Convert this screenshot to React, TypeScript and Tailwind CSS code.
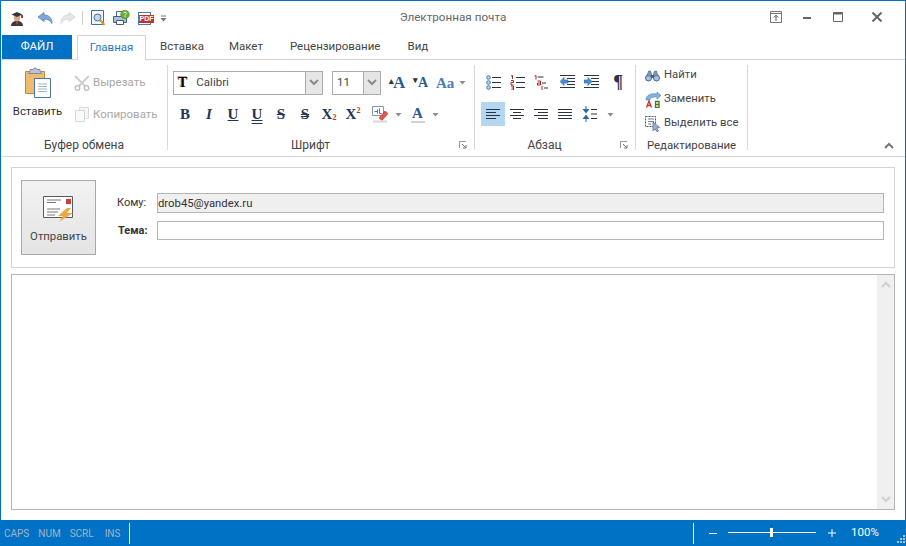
const FONT = "font-['Roboto',sans-serif]"

function Caret({ className = "" }: { className?: string }) {
    return (
        <svg width="7" height="7" viewBox="0 0 7 7" className={className}>
            <path d="M0.5 2h6L3.5 5.5z" fill="#8a8a8a" />
        </svg>
    )
}

function Chevron({ color = "#8a8a8a", up = false }: { color?: string; up?: boolean }) {
    return (
        <svg width="10" height="7" viewBox="0 0 10 7">
            <path d={up ? "M1 6l4-4 4 4" : "M1 1l4 4 4-4"} fill="none" stroke={color} strokeWidth="2" />
        </svg>
    )
}

function QuickAccess() {
    return (
        <div className="flex items-center pl-[9px] h-full">
            {/* user */}
            <svg width="14" height="16" viewBox="0 0 14 16" className="mt-[2px]">
                <path d="M1 15c0-3 2-5 6-5s6 2 6 5z" fill="#3a3a40" />
                <path d="M5.500 10.500h3L7 14z" fill="#b8463a" />
                <circle cx="7" cy="7" r="3.200" fill="#d8a78c" />
                <path d="M1.500 3.500L7 1l5.500 2.500L7 6z" fill="#34343a" />
                <path d="M11 4h2v3h-2z" fill="#b03a2e" />
            </svg>
            {/* undo */}
            <svg width="16" height="12" viewBox="0 0 16 12" className="ml-[13px]">
                <path d="M1 5l6-4.500V3c5 0 8 3 8 8.500-1.500-3-4-4.500-8-4.500v2.500z" fill="#7fa9d8" stroke="#4f7fb5" strokeWidth="0.8" />
            </svg>
            {/* redo */}
            <svg width="16" height="12" viewBox="0 0 16 12" className="ml-[7px]">
                <path d="M15 5L9 .5V3C4 3 1 6 1 11.500 2.500 8.500 5 7 9 7v2.500z" fill="#e6e6e6" stroke="#cfcfcf" strokeWidth="0.8" />
            </svg>
            <div className="w-px h-[14px] bg-[#d0d0d0] ml-[6px]" />
            {/* preview */}
            <svg width="15" height="17" viewBox="0 0 15 17" className="ml-[8px]">
                <path d="M.5.5h12v14H.5z" fill="#f4f8fd" stroke="#3c6ea8" />
                <circle cx="6.500" cy="7.500" r="3.500" fill="#bcd8f2" stroke="#3f6f9f" />
                <path d="M9 10l4.500 5" stroke="#d99a2b" strokeWidth="2.200" />
            </svg>
            {/* printer */}
            <svg width="17" height="16" viewBox="0 0 17 16" className="ml-[7px]">
                <path d="M3.500 1.500h7v5h-7z" fill="#f4f4f4" stroke="#4c6a8c" />
                <path d="M.5 6.500h13v6H.5z" fill="#a9c2dc" stroke="#3f5f82" />
                <path d="M3.500 10.500h7v4h-7z" fill="#fff" stroke="#3f5f82" />
                <circle cx="12" cy="4.500" r="4.300" fill="#6cab2f" stroke="#4c8a1c" strokeWidth="0.600" />
                <path d="M10.500 3.300c.3-1.500 3-1.500 3 .2 0 1-1.500 1-1.500 2M12 6.200v1" stroke="#fff" strokeWidth="1" fill="none" />
            </svg>
            {/* pdf */}
            <div className="ml-[8px] relative w-[16px] h-[13px] mt-[1px]">
                <div className="absolute left-0 top-0 w-[13px] h-[13px] bg-white border border-[#4a78ae]" />
                <div className="absolute left-[1px] top-[3px] w-[15px] h-[8px] bg-[#c4302b] text-white font-['Liberation_Sans',sans-serif] font-bold text-[7px] leading-[8px] text-center">PDF</div>
            </div>
            <svg width="7" height="7" viewBox="0 0 7 7" className="ml-[6px]">
                <path d="M1 1h5" stroke="#777" />
                <path d="M.5 3h6L3.500 6.500z" fill="#777" />
            </svg>
        </div>
    )
}

function WindowButtons() {
    return (
        <div className="flex items-center justify-end h-full">
            <svg width="12" height="12" viewBox="0 0 12 12" className="mb-[3px]">
                <path d="M.5.5h11v11H.5z" fill="none" stroke="#777" />
                <path d="M.5 2.500h11" stroke="#777" />
                <path d="M6 10V4.500M3.700 6.500L6 4.200l2.300 2.300" fill="none" stroke="#555" />
            </svg>
            <div className="w-2 h-[2px] bg-[#666] ml-[21px] mb-[1px]" />
            <svg width="10" height="10" viewBox="0 0 10 10" className="ml-[22px] mb-[3px]">
                <path d="M.5.5h9v9h-9z" fill="none" stroke="#666" />
                <path d="M0 1.500h10" stroke="#666" strokeWidth="2" />
            </svg>
            <svg width="10" height="10" viewBox="0 0 10 10" className="ml-[29px] mr-[23px] mb-[3px]">
                <path d="M.5.5l9 9M9.500.5l-9 9" stroke="#666" strokeWidth="2" />
            </svg>
        </div>
    )
}

function TabBar() {
    return (
        <div className="flex h-[25px] pl-px border-b border-[#d4d4d4] text-[11.5px] text-[#444]">
            <div className="w-[70px] h-[24px] bg-[#0072c6] text-white flex items-center justify-center">ФАЙЛ</div>
            <div className="ml-[5px] w-[69px] h-[25px] border-x border-t border-[#d4d4d4] bg-white text-[#2b79c2] flex items-center justify-center">Главная</div>
            <div className="flex h-[24px] items-center gap-[27px] ml-[14px]">
                <span className="-mr-[2px]">Вставка</span>
                <span>Макет</span>
                <span>Рецензирование</span>
                <span>Вид</span>
            </div>
        </div>
    )
}

function PasteIcon() {
    return (
        <svg width="28" height="32" viewBox="0 0 28 32">
            <path d="M1.500 4.500h19v22h-19z" fill="#eebc6e" stroke="#b98a45" />
            <path d="M6 4V2.500h3c.5-2 3.500-2 4 0h3V4l1.500 2.500h-13z" fill="#b9c5d4" stroke="#7f8ea3" />
            <path d="M10.500 11.500h16v19h-16z" fill="#fff" stroke="#4a71ad" />
            <path d="M14 17h9M14 19.500h9M14 22h9M14 24.500h9" stroke="#9fb3d2" />
        </svg>
    )
}

function ScissorsIcon() {
    return (
        <svg width="16" height="16" viewBox="0 0 16 16">
            <path d="M1 1l10 10M15 1L5 11" stroke="#cfcfcf" strokeWidth="2" />
            <circle cx="3.500" cy="13" r="2.300" fill="none" stroke="#bcbcbc" strokeWidth="1.300" />
            <circle cx="12.500" cy="13" r="2.300" fill="none" stroke="#bcbcbc" strokeWidth="1.300" />
        </svg>
    )
}

function CopyIcon() {
    return (
        <svg width="14" height="15" viewBox="0 0 14 15">
            <path d="M4.500.5h9v11h-9z" fill="#f7f7f7" stroke="#dcdcdc" />
            <path d="M.5 3.500h9v11h-9z" fill="#fafafa" stroke="#d6d6d6" />
        </svg>
    )
}

function Group({
    width,
    label,
    labelClass = "text-[12px]",
    launcher = false,
    children,
}: {
    width: string
    label: string
    labelClass?: string
    launcher?: boolean
    children: React.ReactNode
}) {
    return (
        <div className={`${width} h-[85px] border-r border-[#d9d9d9] flex flex-col`}>
            <div className="h-[75px]">{children}</div>
            <div className="flex items-center h-[10px]">
                <span className={`flex-1 text-center leading-[15px] text-[#444] ${labelClass}`}>{label}</span>
                {launcher ? (
                    <div className="w-[21px] pl-[6px] flex">
                        <svg width="8" height="8" viewBox="0 0 8 8">
                            <path d="M.5 7V.5H7" fill="none" stroke="#999" />
                            <path d="M3 3l4 4M7 4v3H4" fill="none" stroke="#777" />
                        </svg>
                    </div>
                ) : null}
            </div>
        </div>
    )
}

function Combo({ width, text, icon = false }: { width: string; text: string; icon?: boolean }) {
    return (
        <div className={`${width} h-[24px] border border-[#ababab] flex items-center bg-white`}>
            <div className="flex-1 flex items-center pl-[4px] text-[11.5px] text-[#444]">
                {icon ? (
                    <span className="font-['Liberation_Serif',serif] font-bold text-[14px] leading-none text-black mr-[9px] [text-shadow:-1px_-1px_0_#aaa]">T</span>
                ) : null}
                {text}
            </div>
            <div className="w-[17px] h-full bg-[#e6e6e6] border-l border-[#ababab] flex items-center justify-center">
                <Chevron />
            </div>
        </div>
    )
}

function Fmt({ children, className = "" }: { children: React.ReactNode; className?: string }) {
    return (
        <div className={`w-6 h-6 flex items-center justify-center font-['Liberation_Serif',serif] font-bold text-[15px] text-[#26344f] ${className}`}>
            {children}
        </div>
    )
}

function FontGroup() {
    return (
        <div className="pl-[5px] pt-[5px]">
            <div className="flex items-center">
                <Combo width="w-[150px]" text="Calibri" icon />
                <div className="ml-[9px]"><Combo width="w-[49px]" text="11" /></div>
                <span className="ml-[8px] w-[16px] text-center font-['Liberation_Serif',serif] font-bold text-[17px] text-[#2c5a94]">
                    <sup className="text-[9px] text-[#333] -mr-px">▴</sup>A
                </span>
                <span className="ml-[8px] w-[15px] text-center font-['Liberation_Serif',serif] font-bold text-[14px] text-[#2c5a94]">
                    <sup className="text-[9px] text-[#333]">▾</sup>A
                </span>
                <span className="ml-[8px] w-[17px] text-center font-['Liberation_Serif',serif] font-bold text-[15px] text-[#4a7cb5]">Aa</span>
                <Caret className="ml-[6px]" />
            </div>
            <div className="flex items-center mt-[7px]">
                <Fmt>B</Fmt>
                <Fmt className="italic">I</Fmt>
                <Fmt className="underline">U</Fmt>
                <Fmt className="underline decoration-double">U</Fmt>
                <Fmt className="line-through">S</Fmt>
                <Fmt className="line-through decoration-double">S</Fmt>
                <Fmt>X<span className="text-[8px] text-[#b03a2e] mt-[7px]">2</span></Fmt>
                <Fmt>X<span className="text-[8px] text-[#b03a2e] -mt-[7px]">2</span></Fmt>
                <svg width="17" height="17" viewBox="0 0 17 17" className="ml-[7px]">
                    <path d="M.5.5h11v9H.5z" fill="#fff" stroke="#7d93b8" />
                    <path d="M2.500 5.500h3M5.500 3.500v4M7.500 2.500v5h2" stroke="#5874a5" fill="none" />
                    <path d="M7 12l6-7 3 2.500-6 7z" fill="#e0574c" stroke="#b73a30" strokeWidth="0.600" />
                    <path d="M1 15.500h14" stroke="#d8d8d8" strokeWidth="2" />
                </svg>
                <Caret className="ml-[6px]" />
                <span className="ml-[8px] w-[15px] flex flex-col items-center">
                    <span className="font-['Liberation_Serif',serif] font-bold text-[15px] leading-[14px] text-[#2c5a94]">A</span>
                    <span className="w-[14px] h-[2px] mt-px bg-[#d0d0d0]" />
                </span>
                <Caret className="ml-[7px]" />
            </div>
        </div>
    )
}

function Lines({ pattern }: { pattern: "left" | "center" | "right" | "justify" }) {
    const rows = {
        left: ["M0 1.500h14", "M0 4.500h10", "M0 7.500h14", "M0 10.500h10"],
        center: ["M0 1.500h14", "M3 4.500h8", "M0 7.500h14", "M3 10.500h8"],
        right: ["M0 1.500h14", "M4 4.500h10", "M0 7.500h14", "M4 10.500h10"],
        justify: ["M0 1.500h14", "M0 4.500h14", "M0 7.500h14", "M0 10.500h14"],
    }[pattern]
    return (
        <svg width="14" height="12" viewBox="0 0 14 12">
            {rows.map((d) => (
                <path key={d} d={d} stroke="#2a3342" />
            ))}
        </svg>
    )
}

function ListBullets() {
    return (
        <svg width="15" height="15" viewBox="0 0 15 15">
            {[2.500, 7.500, 12.500].map((y) => (
                <g key={y}>
                    <circle cx="2.500" cy={y} r="1.800" fill="#bcd5ee" stroke="#3f78b5" />
                    <path d={`M6 ${y}h9`} stroke="#2a3342" />
                </g>
            ))}
        </svg>
    )
}

function ListNumbers() {
    return (
        <svg width="15" height="15" viewBox="0 0 15 15">
            <path d="M1 1l1.500-.5V4M1 5.500h2.500v2H1V10h2.500M1 11h2.500v4H1M1.500 13h2" fill="none" stroke="#a32a2a" />
            <path d="M6 2.500h9M6 7.500h9M6 12.500h9" stroke="#2a3342" />
        </svg>
    )
}

function ListMulti() {
    return (
        <svg width="14" height="15" viewBox="0 0 14 15">
            <path d="M.5 1l1.500-.5V4.500M3.500 6h3v4h-3V8h3M8 11v4M8 9.500v.5" fill="none" stroke="#a32a2a" />
            <path d="M3.500 2h6M8 8h4M10 13h4" stroke="#2a3342" />
        </svg>
    )
}

function Indent({ flip = false }: { flip?: boolean }) {
    return (
        <svg width="15" height="14" viewBox="0 0 15 14">
            <path d="M0 .5h15M7 3.500h8M7 6.500h8M7 9.500h8M0 12.500h15" stroke="#2a3342" />
            <path
                d={flip ? "M0 5h4V2.500L8 6.500l-4 4V8H0z" : "M8 5H4V2.500L0 6.500l4 4V8h4z"}
                fill="#4a90d0"
                stroke="#2d6aa5"
                strokeWidth="0.600"
            />
        </svg>
    )
}

function Spacing() {
    return (
        <svg width="15" height="16" viewBox="0 0 15 16">
            <path d="M4 0v3M4 13v3" stroke="#2d6aa5" />
            <path d="M.5 3h7L4 7.500zM.5 13h7L4 8.500z" fill="#2d6aa5" />
            <path d="M9 3.500h6M9 8h6M9 12.500h6" stroke="#2a3342" />
        </svg>
    )
}

function ParagraphGroup() {
    const cell = "w-6 h-6 flex items-center justify-center"
    return (
        <div className="pl-[6px] pt-[5px]">
            <div className="flex items-center h-[24px]">
                <div className={cell}><ListBullets /></div>
                <div className={cell}><ListNumbers /></div>
                <div className={cell}><ListMulti /></div>
                <div className={`${cell} ml-[2px]`}><Indent /></div>
                <div className={cell}><Indent flip /></div>
                <div className={`${cell} ml-[3px] font-['Liberation_Serif',serif] font-bold text-[18px] text-[#26344f]`}>¶</div>
            </div>
            <div className="flex items-center mt-[8px] h-[24px]">
                <div className={`${cell} bg-[#b4d6f0]`}><Lines pattern="left" /></div>
                <div className={cell}><Lines pattern="center" /></div>
                <div className={cell}><Lines pattern="right" /></div>
                <div className={cell}><Lines pattern="justify" /></div>
                <div className={cell}><Spacing /></div>
                <Caret className="ml-[6px]" />
            </div>
        </div>
    )
}

function EditGroup() {
    return (
        <div className="pl-[9px] pt-px text-[11.3px] text-[#444] flex flex-col gap-[5px]">
            <div className="flex items-center h-[19px] gap-[4px]">
                <svg width="15" height="12" viewBox="0 0 15 12">
                    <circle cx="3.500" cy="8" r="3" fill="#a9c6e6" stroke="#44628a" />
                    <circle cx="11.500" cy="8" r="3" fill="#a9c6e6" stroke="#44628a" />
                    <path d="M2 6l1.500-5h2L7 6zM8 6l1.500-5h2L13 6z" fill="#8599b5" stroke="#44628a" strokeWidth="0.600" />
                    <path d="M6 5h3v3H6z" fill="#44628a" />
                </svg>
                <span>Найти</span>
            </div>
            <div className="flex items-center h-[19px] gap-[3px]">
                <svg width="16" height="16" viewBox="0 0 16 16">
                    <path d="M1 8C1 3 6 1 12 2V0l4 3.500L12 7V5C8 4.500 5 5.500 5 8z" fill="#7fb4e0" stroke="#4c80b3" strokeWidth="0.600" />
                    <path d="M1.500 15.500L4 9l2.500 6.500M2.500 13.500h3" fill="none" stroke="#c4302b" strokeWidth="1.300" />
                    <path d="M10.500 9.500h3.500v6h-3.500zM10.500 12.500h3.500" fill="none" stroke="#3f7a1e" strokeWidth="1.300" />
                </svg>
                <span>Заменить</span>
            </div>
            <div className="flex items-center h-[19px] gap-[3px]">
                <svg width="16" height="16" viewBox="0 0 16 16">
                    <path d="M.5 .5h10v10H.5z" fill="none" stroke="#555" strokeDasharray="2 1" />
                    <path d="M3 3h6M3 5.500h6M3 8h3" stroke="#6d7f99" />
                    <path d="M8 6l6.500 5.500-3 .5 2 3-1.500.8-2-3-2 2z" fill="#9bb4d1" stroke="#44628a" strokeWidth="0.700" />
                </svg>
                <span>Выделить все</span>
            </div>
        </div>
    )
}

function Ribbon() {
    return (
        <div className="flex h-[97px] border-b border-[#d4d4d4] pt-[5px]">
            <Group width="w-[167px]" label="Буфер обмена">
                <div className="flex">
                    <div className="w-[73px] flex flex-col items-center pt-[2px]">
                        <PasteIcon />
                        <span className="text-[11.4px] text-[#333] mt-[4px]">Вставить</span>
                    </div>
                    <div className="flex flex-col text-[11.5px] text-[#a8a8a8] pt-[9px] gap-[15px]">
                        <div className="flex items-center gap-[3px] h-[17px]"><ScissorsIcon /><span>Вырезать</span></div>
                        <div className="flex items-center gap-[4px] h-[17px] pl-px"><CopyIcon /><span>Копировать</span></div>
                    </div>
                </div>
            </Group>
            <Group width="w-[307px]" label="Шрифт" launcher><FontGroup /></Group>
            <Group width="w-[161px]" label="Абзац" launcher><ParagraphGroup /></Group>
            <Group width="w-[112px]" label="Редактирование" labelClass="text-[11.4px]"><EditGroup /></Group>
            <div className="flex-1 flex items-end justify-end pr-[11px] pb-px h-[85px]">
                <Chevron up color="#777" />
            </div>
        </div>
    )
}

function Header() {
    return (
        <div className="h-[101px] border border-[#d4d4d4] flex pl-[9px] pt-[12px]">
            <div className="w-[75px] h-[75px] border border-[#a8a8a8] bg-gradient-to-b from-[#f2f2f2] to-[#e4e4e4] flex flex-col items-center pt-[14px]">
                <svg width="32" height="28" viewBox="0 0 32 28">
                    <path d="M.5 1.500h29v21H.5z" fill="#fff" stroke="#5a5a5a" />
                    <path d="M23 4h5v5h-5z" fill="#c8402f" />
                    <path d="M4 5h14M4 7.500h9M4 14h13M4 17h11M4 20h8" stroke="#777" />
                    <path d="M24 13l-9 8h5l-4 6 14-9h-6l4-5z" fill="#eba743" />
                </svg>
                <span className="text-[11.3px] text-[#444] mt-[6px]">Отправить</span>
            </div>
            <div className="flex-1 flex flex-col pt-[13px] pr-[10px] text-[11px] text-[#333]">
                <div className="flex items-center">
                    <span className="w-[61px] pl-[21px] pt-px">Кому:</span>
                    <input
                        readOnly
                        value="drob45@yandex.ru"
                        className="flex-1 h-[20px] border border-[#b5b5b5] bg-[#efefef] text-[11.3px] text-[#333] outline-none"
                    />
                </div>
                <div className="flex items-center mt-[8px]">
                    <span className="w-[61px] pl-[22px] pt-px font-bold">Тема:</span>
                    <input readOnly value="" className="flex-1 h-[19px] border border-[#b5b5b5] bg-white outline-none" />
                </div>
            </div>
        </div>
    )
}

function Body() {
    return (
        <div className="h-[236px] mt-[6px] border border-[#b5b5b5] flex justify-end">
            <div className="w-[17px] bg-[#f0f0f0] flex flex-col justify-between items-center py-[6px]">
                <Chevron up color="#cfcfcf" />
                <Chevron color="#cfcfcf" />
            </div>
        </div>
    )
}

function StatusBar() {
    return (
        <div className="h-[26px] bg-[#0072c6] flex items-center text-[10px]">
            <div className="flex items-center text-[#a4b2c4] w-[129px] pl-[4px] gap-[9px]">
                <span>CAPS</span>
                <span>NUM</span>
                <span>SCRL</span>
                <span className="ml-[2px]">INS</span>
            </div>
            <div className="w-px h-[21px] bg-white" />
            <div className="flex-1" />
            <div className="w-px h-[21px] bg-white" />
            <div className="ml-[15px] w-2 h-px bg-white" />
            <svg width="88" height="18" viewBox="0 0 88 18" className="ml-[11px]">
                <path d="M0 8.500h88" stroke="#fff" />
                <path d="M42 4h3v9h-3z" fill="#fff" />
                <path d="M43 1h1v1h-1zM43 16h1v1h-1z" fill="#0a2540" />
            </svg>
            <svg width="8" height="8" viewBox="0 0 8 8" className="ml-[12px]">
                <path d="M0 4h8M4 0v8" stroke="#fff" />
            </svg>
            <span className="ml-[15px] w-[28px] text-[11.5px] text-white">100%</span>
            <svg width="8" height="8" viewBox="0 0 8 8" className="ml-[18px] mr-px mt-[12px]">
                <path d="M6 0h2v2H6zM3 3h2v2H3zM6 3h2v2H6zM0 6h2v2H0zM3 6h2v2H3zM6 6h2v2H6z" fill="#a8c8e0" />
            </svg>
        </div>
    )
}

export default function App() {
    return (
        <div className={`${FONT} w-[906px] h-[546px] bg-white flex flex-col border-t border-[#0072c6] overflow-hidden`}>
            <div className="flex-1 flex flex-col border-x border-[#0072c6] min-h-0">
                <div className="grid grid-cols-[1fr_auto_1fr] h-[34px] items-center">
                    <QuickAccess />
                    <div className="text-[11.7px] text-[#666]">Электронная почта</div>
                    <WindowButtons />
                </div>
                <TabBar />
                <Ribbon />
                <div className="px-[10px] pt-[10px]">
                    <Header />
                    <Body />
                </div>
            </div>
            <StatusBar />
        </div>
    )
}
